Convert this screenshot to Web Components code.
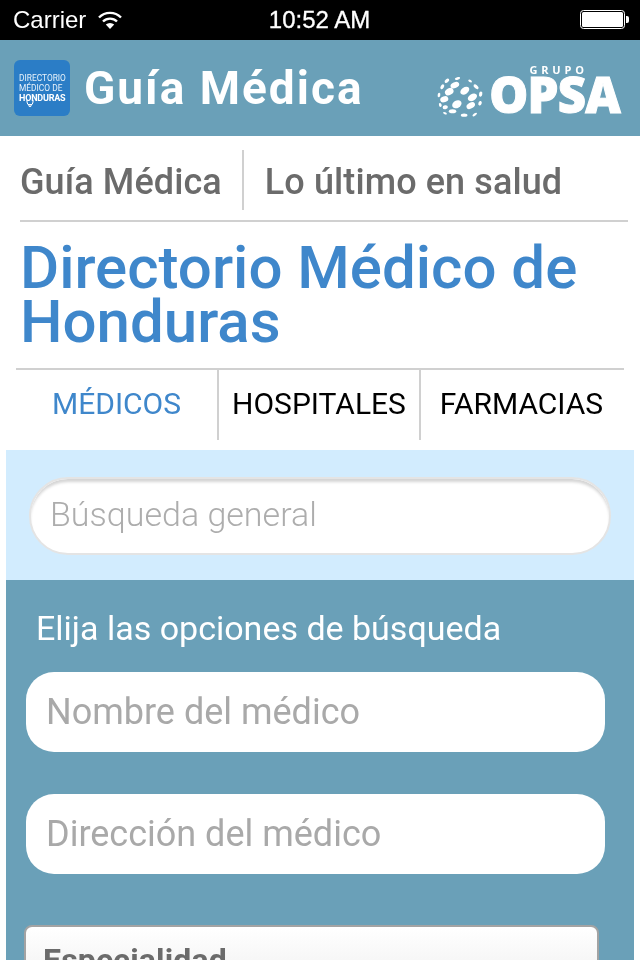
<!DOCTYPE html>
<html lang="es">
<head>
<meta charset="utf-8">
<title>Guía Médica</title>
<style>
    html, body { margin: 0; padding: 0; background: #fff; }
    html { background: #fff; }
    body { width: 640px; height: 960px; overflow: hidden; font-family: Roboto, sans-serif; background: transparent; will-change: transform; }
</style>
</head>
<body>
<status-bar></status-bar>
<app-header></app-header>
<top-tabs></top-tabs>
<page-title>Directorio Médico de Honduras</page-title>
<sub-tabs></sub-tabs>
<search-panel></search-panel>
<options-panel></options-panel>

<script>
// Barra de estado
class StatusBar extends HTMLElement {
    constructor() {
        super();
        this.attachShadow({ mode: 'open' });
        this.shadowRoot.innerHTML = `
            <style>
                :host {
                    display: grid;
                    grid-template-columns: 1fr auto 1fr;
                    align-items: center;
                    height: 40px;
                    padding: 0 11px 0 13px;
                    background: #000;
                    color: #fff;
                    font: 24px/40px "Liberation Sans", sans-serif;
                }
                .left { display: flex; align-items: center; gap: 12px; }
                .time { margin-right: 3px; -webkit-text-stroke: .3px #fff; }
                .batt { justify-self: end; display: flex; align-items: center; }
                svg { display: block; }
            </style>
            <div class="left">
                <span>Carrier</span>
                <svg width="24" height="18" viewBox="0 0 24 18">
                    <path d="M1 6.5a15.5 15.5 0 0 1 22 0" fill="none" stroke="#fff" stroke-width="2.4"/>
                    <path d="M5 10.5a10 10 0 0 1 14 0" fill="none" stroke="#fff" stroke-width="2.4"/>
                    <path d="M12 18l-4.2-4.4a6 6 0 0 1 8.4 0z" fill="#fff"/>
                </svg>
            </div>
            <span class="time">10:52 AM</span>
            <div class="batt">
                <svg width="49" height="20" viewBox="0 0 49 20">
                    <rect x=".5" y=".5" width="44" height="18" rx="3" fill="#000" stroke="#fff"/>
                    <rect x="2" y="2" width="41" height="15" rx="1.5" fill="#fff"/>
                    <path d="M46 6h1a2 2 0 0 1 2 2v3a2 2 0 0 1-2 2h-1z" fill="#fff"/>
                </svg>
            </div>
        `;
    }
}

// Icono de la aplicación
class AppIcon extends HTMLElement {
    constructor() {
        super();
        this.attachShadow({ mode: 'open' });
        this.shadowRoot.innerHTML = `
            <style>
                :host {
                    position: relative;
                    display: flex;
                    flex-direction: column;
                    justify-content: center;
                    box-sizing: border-box;
                    width: 56px;
                    height: 56px;
                    padding: 0 0 1px 5px;
                    border-radius: 6px;
                    background: #2b7dc6;
                    color: #e8f2fa;
                    font: 400 8.4px/10px Roboto, sans-serif;
                    white-space: nowrap;
                }
                b { color: #fff; font-size: 9px; font-weight: 700; letter-spacing: -.2px; }
                svg { position: absolute; left: 12px; top: 40px; }
            </style>
            <span>DIRECTORIO</span>
            <span>MÉDICO DE</span>
            <b>HONDURAS</b>
            <svg width="8" height="7" viewBox="0 0 8 7" fill="none" stroke="#fff" stroke-width="1">
                <path d="M1 0v2a3 3 0 0 0 6 0V0"/><circle cx="4" cy="5.5" r="1.2"/>
            </svg>
        `;
    }
}

// Logotipo del grupo
class OpsaLogo extends HTMLElement {
    constructor() {
        super();
        this.attachShadow({ mode: 'open' });
        // coordenadas tomadas del logo, en escala 3x; los puntos del centro son mayores
        const dots = [
            [80,25,8,4,-15],[48,32,8,5,-40],[118,33,6,3.5,30],[72,45,11,7,-25],[34,50,8,5,-60],
            [136,50,9,5,40],[102,62,12,8,-35],[55,65,11,8,-30],[24,75,4,7,10],[150,72,5,8,10],
            [40,88,10,7,-20],[125,82,12,8,-30],[78,103,12,9,-30],[28,105,4,6,-20],[148,100,5,7,20],
            [43,112,8,6,-10],[120,107,11,7,-30],[65,124,9,5,0],[100,136,10,5,0],[132,134,8,3.5,-35],
            [42,130,6,3,20]
        ].map(([x, y, rx, ry, a]) => {
            const k = Math.hypot(x - 87, y - 84) > 50 ? 1 : 1.25;
            return `<ellipse cx="${x}" cy="${y}" rx="${rx * k}" ry="${ry * k}" transform="rotate(${a} ${x} ${y})"/>`;
        }).join('');
        this.shadowRoot.innerHTML = `
            <style>
                :host { display: flex; align-items: flex-end; gap: 5px; color: #fff; }
                svg { display: block; margin-bottom: -7px; }
                .words { display: flex; flex-direction: column; align-items: center; }
                .grupo { font: 700 11px/12px "Open Sans", sans-serif; letter-spacing: 3.8px; margin-left: 8px; }
                .opsa {
                    font: 800 49px/36px "Open Sans", sans-serif;
                    letter-spacing: -.8px;
                    -webkit-text-stroke: 1px #fff;
                }
            </style>
            <svg width="48" height="42" viewBox="15 21 145 126" fill="#fff">${dots}</svg>
            <div class="words">
                <span class="grupo">GRUPO</span>
                <span class="opsa">OPSA</span>
            </div>
        `;
    }
}

// Cabecera
class AppHeader extends HTMLElement {
    constructor() {
        super();
        this.attachShadow({ mode: 'open' });
        this.shadowRoot.innerHTML = `
            <style>
                :host {
                    display: flex;
                    align-items: center;
                    height: 96px;
                    padding: 0 20px 0 14px;
                    background: #6aa0b8;
                    color: #fff;
                }
                h1 {
                    margin: 0 0 0 14px;
                    font: 700 46px/56px Roboto, sans-serif;
                    letter-spacing: 2px;
                    white-space: nowrap;
                }
                opsa-logo { margin-left: auto; }
            </style>
            <app-icon></app-icon>
            <h1>Guía Médica</h1>
            <opsa-logo></opsa-logo>
        `;
    }
}

// Pestañas superiores
class TopTabs extends HTMLElement {
    constructor() {
        super();
        this.attachShadow({ mode: 'open' });
        this.shadowRoot.innerHTML = `
            <style>
                :host {
                    display: flex;
                    margin: 14px 12px 0 20px;
                    padding-bottom: 10px;
                    border-bottom: 2px solid #d0d0d0;
                    color: #6b6b6b;
                    font: 500 36px/60px Roboto, sans-serif;
                    letter-spacing: .1px;
                }
                span { padding: 2px 20px 0 0; height: 58px; }
                span + span { padding-left: 21px; border-left: 2px solid #d0d0d0; }
            </style>
            <span>Guía Médica</span>
            <span>Lo último en salud</span>
        `;
    }
}

// Título de la página
class PageTitle extends HTMLElement {
    constructor() {
        super();
        this.attachShadow({ mode: 'open' });
        this.shadowRoot.innerHTML = `
            <style>
                :host {
                    display: block;
                    padding: 19px 40px 19px 20px;
                    color: #3f87cb;
                    font: 500 60px/54px Roboto, sans-serif;
                }
            </style>
            <slot></slot>
        `;
    }
}

// Pestañas de categoría
class SubTabs extends HTMLElement {
    constructor() {
        super();
        this.attachShadow({ mode: 'open' });
        this.shadowRoot.innerHTML = `
            <style>
                :host {
                    display: grid;
                    grid-template-columns: 201px 202px 1fr;
                    width: 608px;
                    height: 70px;
                    margin: 0 0 10px 16px;
                    border-top: 2px solid #d0d0d0;
                    box-sizing: content-box;
                    color: #000;
                    font: 400 30px/68px Roboto, sans-serif;
                    text-align: center;
                }
                span { display: block; white-space: nowrap; }
                span + span { border-left: 2px solid #d0d0d0; }
                span:last-child { padding-right: 2px; }
                .on { color: #3f87cb; }
            </style>
            <span class="on">MÉDICOS</span>
            <span>HOSPITALES</span>
            <span>FARMACIAS</span>
        `;
    }
}

// Campo de texto redondeado
class RoundField extends HTMLElement {
    constructor() {
        super();
        this.attachShadow({ mode: 'open' });
        this.shadowRoot.innerHTML = `
            <style>
                :host {
                    display: block;
                    box-sizing: border-box;
                    height: 80px;
                    padding-left: 20px;
                    border-radius: 28px;
                    background: #fff;
                    color: #a9a9a9;
                    font: 400 36px/80px Roboto, sans-serif;
                }
            </style>
            <slot></slot>
        `;
    }
}

// Búsqueda general
class SearchPanel extends HTMLElement {
    constructor() {
        super();
        this.attachShadow({ mode: 'open' });
        this.shadowRoot.innerHTML = `
            <style>
                :host {
                    display: block;
                    height: 130px;
                    box-sizing: border-box;
                    margin: 0 6px;
                    padding: 27px 23px 0 23px;
                    background: #d2ecfe;
                }
                .pill {
                    box-sizing: border-box;
                    height: 78px;
                    padding-left: 19px;
                    border: 2px solid #e4e4e4;
                    border-radius: 39px;
                    background: #fff;
                    box-shadow: inset 0 4px 3px -1px #d5d5d5;
                    color: #adadad;
                    font: 300 34px/70px Roboto, sans-serif;
                }
            </style>
            <div class="pill">Búsqueda general</div>
        `;
    }
}

// Opciones de búsqueda
class OptionsPanel extends HTMLElement {
    constructor() {
        super();
        this.attachShadow({ mode: 'open' });
        this.shadowRoot.innerHTML = `
            <style>
                :host {
                    display: block;
                    height: 380px;
                    box-sizing: border-box;
                    margin: 0 6px;
                    padding: 24px 29px 0 20px;
                    background: #6aa0b8;
                    overflow: hidden;
                }
                h2 {
                    margin: 0 0 20px 10px;
                    color: #fff;
                    font: 400 34px/48px Roboto, sans-serif;
                }
                round-field + round-field { margin-top: 42px; }
                .select {
                    box-sizing: border-box;
                    width: 575px;
                    height: 80px;
                    margin: 51px 0 0 -2px;
                    padding-left: 17px;
                    border: 2px solid #a3a3a3;
                    border-radius: 8px;
                    background: linear-gradient(#fff, #ececec);
                    color: #6b6b6b;
                    font: 700 32px/66px Roboto, sans-serif;
                    letter-spacing: .15px;
                }
            </style>
            <h2>Elija las opciones de búsqueda</h2>
            <round-field>Nombre del médico</round-field>
            <round-field>Dirección del médico</round-field>
            <div class="select">Especialidad</div>
        `;
    }
}

customElements.define('status-bar', StatusBar);
customElements.define('app-icon', AppIcon);
customElements.define('opsa-logo', OpsaLogo);
customElements.define('app-header', AppHeader);
customElements.define('top-tabs', TopTabs);
customElements.define('page-title', PageTitle);
customElements.define('sub-tabs', SubTabs);
customElements.define('round-field', RoundField);
customElements.define('search-panel', SearchPanel);
customElements.define('options-panel', OptionsPanel);
</script>
</body>
</html>
